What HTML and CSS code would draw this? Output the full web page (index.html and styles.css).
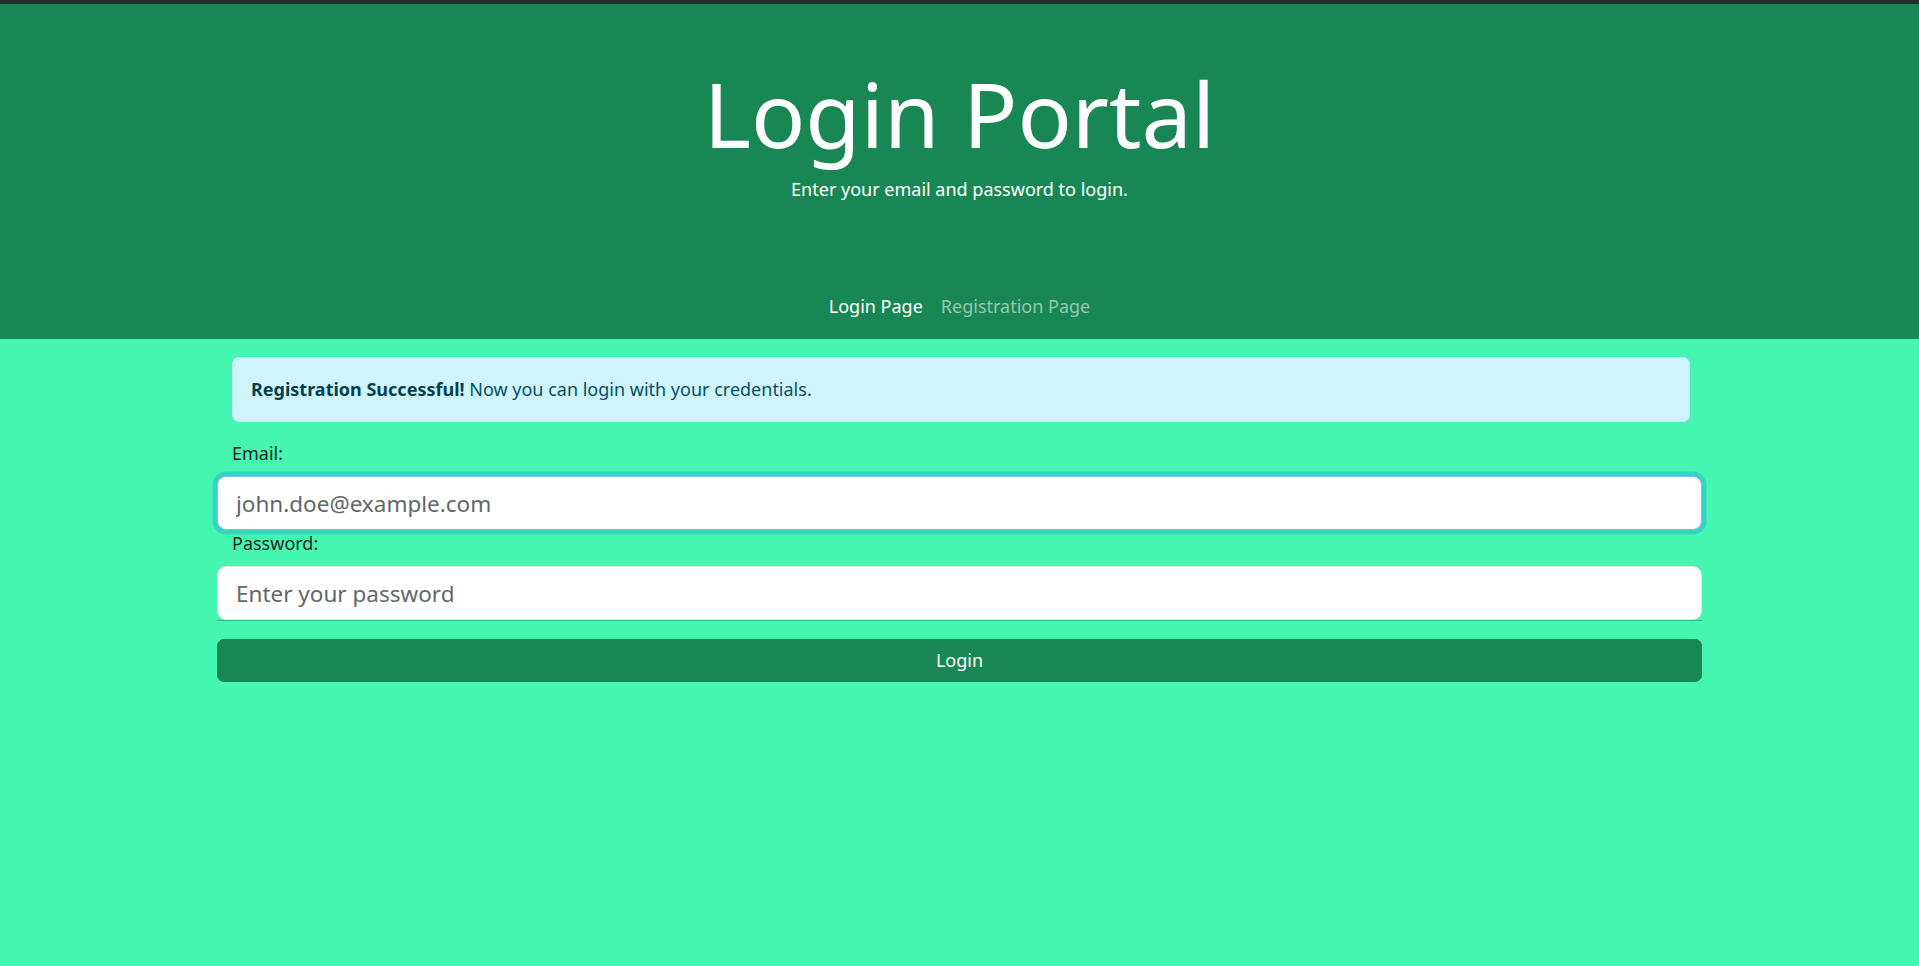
FILE: index.html
```html
<!DOCTYPE html>
<html lang="en">
<head>
<meta charset="utf-8">
<title>Login Portal</title>
<link rel="stylesheet" href="styles.css">
</head>
<body>
<div class="topbar"></div>
<header class="site-header">
  <div class="hero">
    <h1 class="hero-title">Login Portal</h1>
    <p class="hero-lead">Enter your email and password to login.</p>
  </div>
  <nav class="nav">
    <a class="nav-link active" href="#">Login Page</a>
    <a class="nav-link" href="#">Registration Page</a>
  </nav>
</header>
<main class="container">
  <div class="alert"><strong>Registration Successful!</strong> Now you can login with your credentials.</div>
  <form class="login-form">
    <label class="form-label" for="email">Email:</label>
    <input class="form-control focused" type="email" id="email" placeholder="john.doe@example.com" autofocus>
    <label class="form-label pw-label" for="password">Password:</label>
    <input class="form-control" type="password" id="password" placeholder="Enter your password">
    <div class="divider"></div>
    <button class="btn" type="button">Login</button>
  </form>
</main>
</body>
</html>
```

FILE: styles.css
```css
* { box-sizing: border-box; }
html, body { margin: 0; padding: 0; }
body {
  font-family: "Noto Sans", "Open Sans", sans-serif;
  font-size: 18px;
  line-height: 1.5;
  color: #212529;
  background: #45f6b1;
  min-height: 966px;
}
.topbar { height: 5px; background: #2d2d2d; border-bottom: 1px solid #3c3c3c; }
.site-header {
  background: #198754;
  color: #fff;
  margin-top: -1px;
}
.hero {
  padding: 55px 0 54px;
  text-align: center;
}
.hero-title {
  margin: 0 0 9px;
  font-size: 90px;
  font-weight: 400;
  line-height: 1.2;
}
.hero-lead {
  margin: 0 0 18px;
  font-size: 18px;
  line-height: 1.5;
}
.nav {
  display: flex;
  justify-content: center;
  padding: 9px 0 10px;
}
.nav-link {
  display: block;
  padding: 9px 9px;
  font-size: 18px;
  line-height: 1.5;
  color: rgba(255,255,255,.55);
  text-decoration: none;
}
.nav-link.active { color: #fff; }
.container {
  width: 1485px;
  margin: 0 auto;
  padding: 18px 0 0;
}
.alert {
  margin: 0 12px 18px 15px;
  padding: 18px 18px;
  background: #cff4fc;
  border: 1px solid #b6effb;
  border-radius: 6.75px;
  color: #055160;
  font-size: 18px;
  line-height: 1.5;
}
.alert strong { font-weight: 700; color: #04414d; }
.login-form { display: flex; flex-direction: column; }
.form-label {
  display: block;
  padding-left: 15px;
  margin-bottom: 9px;
  font-size: 18px;
  line-height: 1.5;
  color: #212529;
}
.pw-label { margin-bottom: 9px; }
.form-control {
  display: block;
  width: 100%;
  height: 54px;
  padding: 9px 18px;
  font-family: inherit;
  font-size: 22.5px;
  line-height: 1.5;
  color: #212529;
  background: #fff;
  border: 1px solid #dee2e6;
  border-radius: 9px;
  outline: none;
}
.form-control::placeholder { color: #62676c; opacity: 1; }
.form-control.focused {
  border-color: #86b7fe;
  box-shadow: 0 0 0 4.5px rgba(13,110,253,.25);
}
.divider {
  height: 1px;
  background: #32b985;
  margin: 0 0 18px;
}
.btn {
  display: block;
  width: 100%;
  height: 43px;
  padding: 6.75px 13.5px;
  font-family: inherit;
  font-size: 18px;
  line-height: 1.5;
  color: #fff;
  background: #198754;
  border: 1px solid #198754;
  border-radius: 6.75px;
  cursor: pointer;
}
```
